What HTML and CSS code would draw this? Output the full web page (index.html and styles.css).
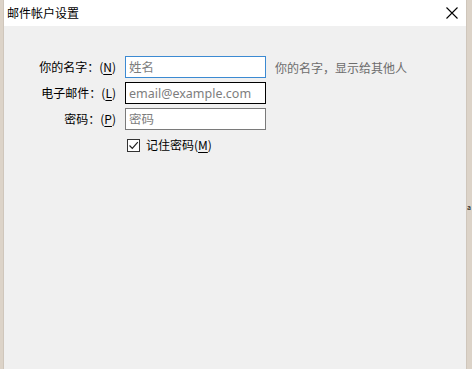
FILE: index.html
```html
<!DOCTYPE html>
<html>
<head>
  <meta charset="UTF-8">
  <title>邮件帐户设置</title>
  <link rel="stylesheet" href="styles.css">
</head>
<body>
  <div class="desk">
    <div class="edge edge-left"></div>
    <div class="window">
      <div class="titlebar">
        <span class="title">邮件帐户设置</span>
        <svg class="close" width="12" height="12" viewBox="0 0 12 12">
          <path d="M0.5 0.5 L11.5 11.5 M11.5 0.5 L0.5 11.5" stroke="#000" stroke-width="1.1" fill="none"/>
        </svg>
      </div>
      <div class="content">
        <div class="form">
          <label class="label">你的名字：(<u>N</u>)</label>
          <input class="field focused" type="text" placeholder="姓名">
          <span class="hint">你的名字，显示给其他人</span>

          <label class="label">电子邮件：(<u>L</u>)</label>
          <input class="field hover" type="text" placeholder="email@example.com">
          <span></span>

          <label class="label">密码：(<u>P</u>)</label>
          <input class="field" type="password" placeholder="密码">
          <span></span>

          <span></span>
          <div class="remember">
            <span class="check">
              <svg width="11" height="11" viewBox="0 0 11 11">
                <path d="M1.5 5.5 L4.3 8.3 L9.8 2.2" stroke="#222" stroke-width="1.2" fill="none"/>
              </svg>
            </span>
            <span>记住密码(<u>M</u>)</span>
          </div>
        </div>
      </div>
    </div>
    <div class="edge edge-right">
      <span class="peek">a</span>
    </div>
  </div>
</body>
</html>
```

FILE: styles.css
```css
html, body {
  margin: 0;
  padding: 0;
  height: 100%;
}
body {
  font-family: "Noto Sans CJK SC", "Noto Sans", sans-serif;
  font-size: 12px;
  color: #000;
  background: #d6cdc2;
  overflow: hidden;
}
.desk {
  display: flex;
  height: 369px;
}
.edge {
  background: #dcd3c8;
}
.edge-left {
  width: 3px;
  border-right: 1px solid #cfc6bb;
}
.edge-right {
  width: 5px;
  border-left: 1px solid #cfc6bb;
  position: relative;
  overflow: hidden;
}
.peek {
  position: absolute;
  left: 0;
  top: 202px;
  font-size: 7px;
  line-height: 10px;
}
.window {
  flex: 1;
  display: flex;
  flex-direction: column;
  background: #f0f0f0;
}
.titlebar {
  height: 26px;
  background: #fff;
  display: flex;
  align-items: center;
  justify-content: space-between;
  padding: 0 8px 0 3px;
}
.title {
  font-size: 12px;
  line-height: 16px;
}
.close {
  display: block;
}
.content {
  flex: 1;
  padding-top: 30px;
}
.form {
  display: grid;
  grid-template-columns: 112px 141px auto;
  column-gap: 9px;
  row-gap: 4px;
  align-items: center;
}
.label {
  text-align: right;
  line-height: 22px;
  white-space: nowrap;
}
.label u, .remember u {
  text-decoration: underline;
  text-underline-offset: 2px;
}
.field {
  box-sizing: border-box;
  height: 22px;
  width: 141px;
  margin: 0;
  padding: 0 3px;
  border: 1px solid #7a7a7a;
  background: #fff;
  font-family: "Noto Sans", "Noto Sans CJK SC", sans-serif;
  font-size: 12.5px;
  outline: none;
}
.field::placeholder {
  color: #7d7d7d;
}
.field.focused {
  border-color: #3c8ad2;
}
.field.hover {
  border-color: #000;
}
.hint {
  color: #6d6d6d;
  white-space: nowrap;
}
.remember {
  grid-column: 2 / span 2;
  display: flex;
  align-items: center;
  gap: 6px;
  margin-left: 2px;
  margin-top: 1px;
  line-height: 20px;
}
.check {
  box-sizing: border-box;
  width: 13px;
  height: 13px;
  border: 1px solid #333;
  background: #fff;
  display: flex;
  align-items: center;
  justify-content: center;
}
```
